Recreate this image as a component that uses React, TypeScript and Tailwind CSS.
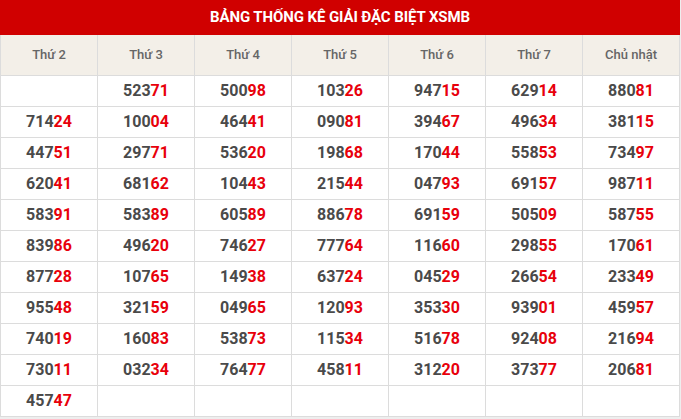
const days = ['Thứ 2', 'Thứ 3', 'Thứ 4', 'Thứ 5', 'Thứ 6', 'Thứ 7', 'Chủ nhật'];

const rows: string[][] = [
  ['', '52371', '50098', '10326', '94715', '62914', '88081'],
  ['71424', '10004', '46441', '09081', '39467', '49634', '38115'],
  ['44751', '29771', '53620', '19868', '17044', '55853', '73497'],
  ['62041', '68162', '10443', '21544', '04793', '69157', '98711'],
  ['58391', '58389', '60589', '88678', '69159', '50509', '58755'],
  ['83986', '49620', '74627', '77764', '11660', '29855', '17061'],
  ['87728', '10765', '14938', '63724', '04529', '26654', '23349'],
  ['95548', '32159', '04965', '12093', '35330', '93901', '45957'],
  ['74019', '16083', '53873', '11534', '51678', '92408', '21694'],
  ['73011', '03234', '76477', '45811', '31220', '37377', '20681'],
  ['45747', '', '', '', '', '', ''],
];

function Num({ value }: { value: string }) {
  if (!value) return null;
  return (
    <>
      <span className="text-[#4a4a4a]">{value.slice(0, 3)}</span>
      <span className="text-[#e8000b]">{value.slice(3)}</span>
    </>
  );
}

export default function App() {
  return (
    <div className="w-[681px] h-[419px] bg-[#eeeeee]" style={{ fontFamily: 'Roboto, "Liberation Sans", sans-serif' }}>
      <div className="w-[680px] bg-white">
        <div className="h-[35px] bg-[#d00000] flex items-center justify-center text-white font-bold text-[15px] tracking-[-0.1px]">
          BẢNG THỐNG KÊ GIẢI ĐẶC BIỆT XSMB
        </div>
        <table className="w-full border-collapse table-fixed">
          <thead>
            <tr className="h-[40px] bg-[#f3efe8]">
              {days.map((d) => (
                <th key={d} className="border border-[#dcdcdc] border-t-0 text-[13px] font-medium text-[#666666] align-middle">
                  {d}
                </th>
              ))}
            </tr>
          </thead>
          <tbody>
            {rows.map((r, i) => (
              <tr key={i} className="h-[31px]">
                {r.map((v, j) => (
                  <td key={j} className="border border-[#dcdcdc] text-center text-[16px] font-bold p-0 align-middle">
                    <Num value={v} />
                  </td>
                ))}
              </tr>
            ))}
          </tbody>
        </table>
      </div>
    </div>
  );
}
